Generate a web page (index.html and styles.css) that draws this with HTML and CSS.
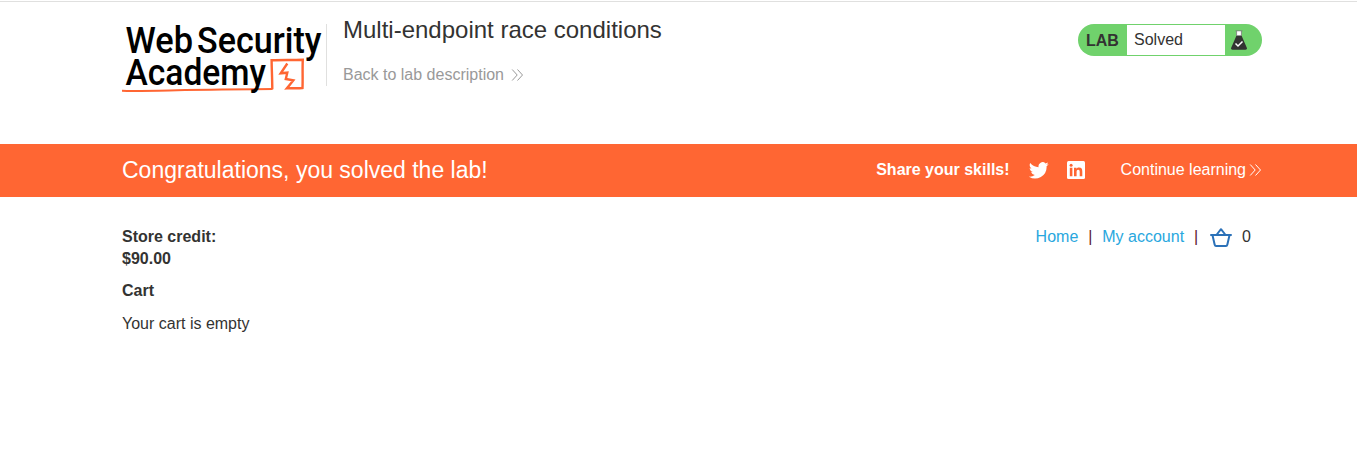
FILE: index.html
```html
<!DOCTYPE html>
<html lang="en">
<head>
<meta charset="utf-8">
<title>Multi-endpoint race conditions</title>
<link rel="stylesheet" href="styles.css">
</head>
<body>
<header class="lab-header">
  <svg class="logo" width="204" height="88" viewBox="0 -8 204 88" role="img" aria-label="Web Security Academy">
    <path class="logo-line" d="M0 70.700C18 71.500 50 70 100 69.500L150.600 69"/>
    <path class="logo-box" d="M150.300 69.300C150.200 58 149.700 48 149.600 40.200C160 39.900 170 40 180.800 39.700C180.300 48 180.900 58 180.500 68C175 68.700 170 68 164.800 68.400L171.300 60.400L163.800 59L165.300 52.700L158.700 53.300L165.300 43.500"/>
    <text class="logo-text" x="3.500" y="32.500" textLength="67.500" lengthAdjust="spacingAndGlyphs">Web</text>
    <text class="logo-text" x="75" y="32.500" textLength="124.500" lengthAdjust="spacingAndGlyphs">Security</text>
    <text class="logo-text" x="3.500" y="65" textLength="140.500" lengthAdjust="spacingAndGlyphs">Academy</text>
  </svg>
  <div class="title-block">
    <h1 class="title">Multi-endpoint race conditions</h1>
    <a class="back">Back to lab description
      <svg class="chevrons" width="13" height="12" viewBox="0 0 13 12"><path d="M1.200.5 6.200 6l-5 5.500M6.500.5l5 5.500-5 5.500"/></svg>
    </a>
  </div>
  <div class="status">
    <span class="status-label">LAB</span>
    <span class="status-text">Solved</span>
    <svg class="flask" width="16" height="20" viewBox="0 0 16 20">
      <path fill="#fff" d="M5.500 1h5v5h-5z"/>
      <path fill="#333332" d="M5.500 5.500h5l5.200 12c.6 1.300.2 2.200-1.200 2.200h-13C.1 19.700-.3 18.800.3 17.500z"/>
      <path fill="none" stroke="#777" stroke-width=".8" d="M4.500.8h7M5.600 1v5M10.400 1v5"/>
      <path fill="none" stroke="#fff" stroke-width="1.500" d="m4.500 13.500 2.500 2.500 4.500-4.500"/>
    </svg>
  </div>
</header>
<section class="banner">
  <h2 class="congrats">Congratulations, you solved the lab!</h2>
  <strong class="share">Share your skills!</strong>
  <svg class="twitter" width="20" height="20" viewBox="0 0 24 24"><path fill="#fff" d="M23.600 4.900c-.9.400-1.800.600-2.800.800 1-.6 1.800-1.600 2.100-2.700-.9.600-2 1-3.100 1.200a4.850 4.850 0 0 0-8.300 4.400C7.500 8.400 3.900 6.500 1.500 3.600c-1.300 2.200-.7 5.100 1.500 6.500-.8 0-1.500-.2-2.200-.6v.1c0 2.300 1.600 4.300 3.900 4.800-.7.200-1.500.2-2.200.1.600 1.900 2.400 3.300 4.500 3.400A9.800 9.800 0 0 1-.2 19.900a13.800 13.800 0 0 0 21.300-12.300c1-.7 1.800-1.600 2.500-2.700z"/></svg>
  <svg class="linkedin" width="18" height="18" viewBox="0 0 18 18">
    <rect width="18" height="18" rx="1.500" fill="#fff"/>
    <path fill="#ff6633" d="M2.800 6.800h2.600v8.400H2.800zM7 6.800h2.500V8c.5-.9 1.400-1.400 2.600-1.400 2.500 0 3.200 1.600 3.200 4v4.600h-2.600v-4.100c0-1.100-.1-2.300-1.500-2.300S9.600 9.900 9.600 11v4.200H7z"/>
    <circle cx="4.100" cy="4.200" r="1.500" fill="#ff6633"/>
  </svg>
  <a class="continue">Continue learning
    <svg class="chevrons" width="13" height="12" viewBox="0 0 13 12"><path d="M1.200.5 6.200 6l-5 5.500M6.500.5l5 5.500-5 5.500"/></svg>
  </a>
</section>
<main class="content">
  <div class="cart">
    <p class="credit">Store credit:<br>$90.00</p>
    <h3 class="cart-title">Cart</h3>
    <p class="cart-empty">Your cart is empty</p>
  </div>
  <nav class="nav">
    <a class="nav-link">Home</a><span class="divider">|</span><a class="nav-link">My account</a><span class="divider">|</span>
    <svg class="basket" width="22" height="19" viewBox="0 0 22 19"><path d="M1 7h20M2.500 7.200l2.200 9.600c.2.800.5 1.200 1.300 1.200h10c.8 0 1.100-.4 1.300-1.200l2.200-9.600M6.800 6.500 11 1.200l4.200 5.300"/></svg>
    <span class="count">0</span>
  </nav>
</main>
</body>
</html>
```
FILE: styles.css
```css
* { box-sizing: border-box; }

body {
  margin: 0;
  background: #fff;
  color: #333332;
  font: 16px/22px "Liberation Sans", Arial, sans-serif;
  border-top: 1px solid #fff;
}

h1, h2, h3, p { margin: 0; }

.lab-header {
  display: flex;
  align-items: flex-start;
  height: 143px;
  padding: 10px 95px 0 122px;
  border-top: 1px solid #e0e0df;
}

.logo-text { font: 500 37.5px Roboto, sans-serif; fill: #000; }
.logo-line, .logo-box { fill: none; stroke: #ff6633; stroke-width: 2.4; }
.logo-line { stroke-width: 2; }

.title-block {
  display: flex;
  flex-direction: column;
  height: 62px;
  margin-top: 12px;
  padding-left: 16px;
  border-left: 1px solid #e0e0df;
}

.title {
  margin-top: -10px;
  font-size: 24px;
  font-weight: 400;
  line-height: 32px;
}

.back {
  display: flex;
  align-items: center;
  gap: 7px;
  margin-top: 18px;
  color: #999;
}

.chevrons { fill: none; stroke: currentColor; stroke-width: 1; }

.status {
  display: flex;
  align-items: center;
  width: 184px;
  height: 32px;
  margin: 12px 0 0 auto;
  border-radius: 16px;
  background: #70d26c;
}

.status-label { width: 49px; padding: 2px 0 0 8px; font-weight: 700; }

.status-text {
  width: 98px;
  height: 30px;
  padding-left: 7px;
  background: #fff;
  line-height: 30px;
}

.flask { margin-left: 6px; }

.banner {
  display: flex;
  align-items: center;
  height: 53px;
  padding: 0 95px 2px 122px;
  background: #ff6633;
  color: #fff;
}

.congrats { font-size: 23px; font-weight: 400; line-height: 26px; }
.share { margin-left: auto; }
.twitter { margin-left: 19px; }
.linkedin { margin-left: 18px; }
.continue { display: flex; align-items: center; gap: 3px; margin-left: 36px; }

.content {
  display: flex;
  justify-content: space-between;
  align-items: flex-start;
  padding: 29px 106px 0 122px;
}

.credit, .cart-title { font-size: 16px; font-weight: 700; }
.cart-title { margin-top: 10px; }
.cart-empty { margin-top: 11px; }
.nav { display: flex; align-items: center; }
.nav-link { color: #29a7de; }
.divider { width: 24px; text-align: center; color: #5c1a2d; }
.basket { margin-left: 2px; fill: none; stroke: #2b71b8; stroke-width: 2; stroke-linejoin: round; stroke-linecap: round; }
.count { margin-left: 10px; }
```
